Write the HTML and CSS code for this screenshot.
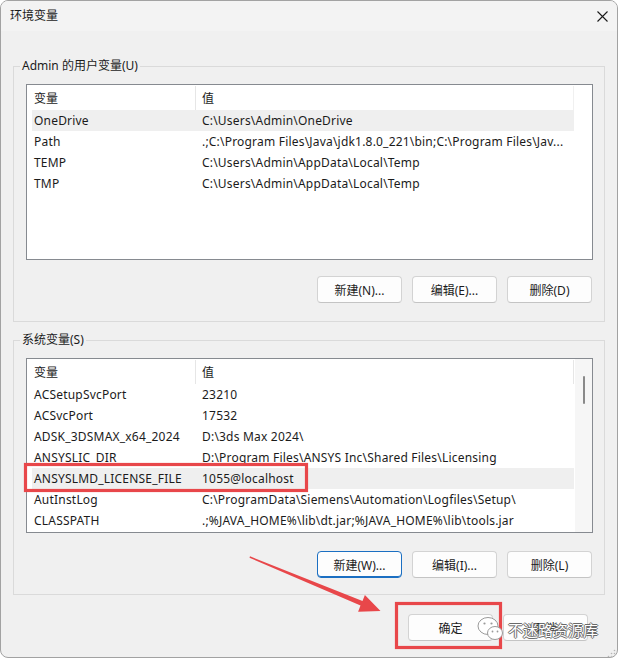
FILE: index.html
```html
<!DOCTYPE html>
<html lang="zh-CN">
<head>
<meta charset="utf-8">
<title>环境变量</title>
<link rel="stylesheet" href="styles.css">
</head>
<body>
<div class="window">
  <div class="titlebar">
    <span class="title">环境变量</span>
    <span class="close" aria-label="关闭">
      <svg width="11" height="11" viewBox="0 0 11 11"><path d="M0.5 0.5 L10.5 10.5 M10.5 0.5 L0.5 10.5" stroke="#1a1a1a" stroke-width="1.1" fill="none"/></svg>
    </span>
  </div>
  <div class="content">
    <fieldset class="group group-user">
      <legend>Admin 的用户变量(U)</legend>
      <div class="list list-user">
        <div class="list-main">
          <div class="lv-header"><div class="hc c1">变量</div><div class="hc c2">值</div></div>
          <div class="lv-row hl"><div class="c1">OneDrive</div><div class="c2">C:\Users\Admin\OneDrive</div></div>
          <div class="lv-row"><div class="c1">Path</div><div class="c2">.;C:\Program Files\Java\jdk1.8.0_221\bin;C:\Program Files\Jav...</div></div>
          <div class="lv-row"><div class="c1">TEMP</div><div class="c2">C:\Users\Admin\AppData\Local\Temp</div></div>
          <div class="lv-row"><div class="c1">TMP</div><div class="c2">C:\Users\Admin\AppData\Local\Temp</div></div>
        </div>
        <div class="vscroll blank"></div>
      </div>
      <div class="btnrow">
        <button class="btn">新建(N)...</button>
        <button class="btn">编辑(E)...</button>
        <button class="btn">删除(D)</button>
      </div>
    </fieldset>

    <fieldset class="group group-sys">
      <legend>系统变量(S)</legend>
      <div class="list list-sys">
        <div class="list-main">
          <div class="lv-header"><div class="hc c1">变量</div><div class="hc c2">值</div></div>
          <div class="lv-row"><div class="c1">ACSetupSvcPort</div><div class="c2">23210</div></div>
          <div class="lv-row"><div class="c1">ACSvcPort</div><div class="c2">17532</div></div>
          <div class="lv-row"><div class="c1">ADSK_3DSMAX_x64_2024</div><div class="c2">D:\3ds Max 2024\</div></div>
          <div class="lv-row"><div class="c1">ANSYSLIC_DIR</div><div class="c2">D:\Program Files\ANSYS Inc\Shared Files\Licensing</div></div>
          <div class="lv-row hl"><div class="c1">ANSYSLMD_LICENSE_FILE</div><div class="c2">1055@localhost</div></div>
          <div class="lv-row"><div class="c1">AutInstLog</div><div class="c2">C:\ProgramData\Siemens\Automation\Logfiles\Setup\</div></div>
          <div class="lv-row"><div class="c1">CLASSPATH</div><div class="c2">.;%JAVA_HOME%\lib\dt.jar;%JAVA_HOME%\lib\tools.jar</div></div>
        </div>
        <div class="vscroll"><div class="thumb"></div></div>
      </div>
      <div class="btnrow">
        <button class="btn btn-focus">新建(W)...</button>
        <button class="btn">编辑(I)...</button>
        <button class="btn">删除(L)</button>
      </div>
    </fieldset>

    <div class="dlg-buttons">
      <button class="btn">确定</button>
      <button class="btn">取消</button>
    </div>
  </div>

  <svg class="annot" width="618" height="659" viewBox="0 0 618 659">
    <rect x="25.5" y="464.5" width="281" height="26" fill="none" stroke="#e8474a" stroke-width="3.2"/>
    <rect x="396.5" y="603.5" width="104" height="44" fill="none" stroke="#e8474a" stroke-width="3.2"/>
    <polygon points="250,556.3 362.5,600.9 364.9,595 380.5,611 358.1,611.8 360.5,605.6 249.5,557.7" fill="#e8474a"/>
    <g class="wechat">
      <ellipse cx="488" cy="626" rx="10" ry="8.5" fill="#fff" stroke="#9a9a9a" stroke-width="1"/>
      <circle cx="484.5" cy="623.5" r="1.1" fill="#9a9a9a"/>
      <circle cx="491.5" cy="623.5" r="1.1" fill="#9a9a9a"/>
      <ellipse cx="495" cy="633" rx="7.5" ry="6.5" fill="#fff" stroke="#9a9a9a" stroke-width="1"/>
      <circle cx="492.5" cy="631.5" r="0.9" fill="#9a9a9a"/>
      <circle cx="497.5" cy="631.5" r="0.9" fill="#9a9a9a"/>
    </g>
    <g fill="#b5b5b5">
      <circle cx="614.5" cy="650.5" r="0.8"/>
      <circle cx="611.5" cy="653.5" r="0.8"/>
      <circle cx="614.5" cy="653.5" r="0.8"/>
      <circle cx="608.5" cy="656.5" r="0.8"/>
      <circle cx="611.5" cy="656.5" r="0.8"/>
      <circle cx="614.5" cy="656.5" r="0.8"/>
    </g>
  </svg>
  <span class="watermark">不迷路资源库</span>
</div>
</body>
</html>
```

FILE: styles.css
```css
* { box-sizing: border-box; }

html, body {
  margin: 0;
  padding: 0;
  background: #ffffff;
}

body {
  font-family: "Noto Sans", "Noto Sans CJK SC", sans-serif;
  font-size: 12px;
  color: #1b1b1b;
}

.window {
  position: relative;
  width: 618px;
  height: 658px;
  border: 1px solid #a2a2a2;
  border-radius: 8px;
  background: #f0f0f0;
  overflow: hidden;
}

.titlebar {
  height: 30px;
  background: #f3f3f3;
  display: flex;
  align-items: center;
  justify-content: space-between;
  padding: 0 9px;
}

.title {
  font-size: 12px;
  line-height: 16px;
  color: #1a1a1a;
}

.close {
  display: flex;
  width: 11px;
  height: 11px;
}

.content {
  padding: 27px 12px 0 12px;
}

.group {
  margin: 0;
  border: 1px solid #dadada;
  padding: 10px 11px 18px 12px;
}

.group-sys {
  margin-top: 10px;
  padding-top: 10px;
  padding-bottom: 16px;
}

.group legend {
  padding: 0 2px;
  margin-left: -6px;
  font-size: 12px;
  line-height: 16px;
  color: #1b1b1b;
}

.list {
  display: flex;
  border: 1px solid #868a90;
  background: #ffffff;
}

.list-user { height: 176px; }
.list-sys { height: 175px; }

.list-main {
  flex: 1;
  padding-left: 5px;
  overflow: hidden;
}

.vscroll {
  width: 17px;
  background: #f6f6f6;
  display: flex;
  justify-content: center;
  padding-top: 17px;
}

.vscroll.blank {
  background: #ffffff;
}

.thumb {
  width: 2px;
  height: 28px;
  border-radius: 1px;
  background: #8a8a8a;
}

.lv-header {
  display: flex;
  height: 25px;
  width: 542px;
}

.hc {
  display: flex;
  align-items: center;
  height: 24px;
  margin-top: 1px;
  border-right: 1px solid #e6e6e6;
}

.hc.c1 { width: 164px; padding-left: 2px; }
.hc.c2 { flex: 1; padding-left: 6px; }

.list-user .hc.c2 { border-right-color: #f0f0f0; }

.lv-row {
  display: flex;
  align-items: center;
  height: 21px;
  width: 542px;
  white-space: nowrap;
  color: #1b1b1b;
  letter-spacing: 0.2px;
}

.lv-row.hl { background: #efefef; }

.lv-row .c1 {
  width: 164px;
  padding-left: 2px;
  overflow: hidden;
}

.lv-row .c2 {
  flex: 1;
  padding-left: 6px;
  overflow: hidden;
}

.btnrow {
  display: flex;
  justify-content: flex-end;
  gap: 10px;
  margin-top: 16px;
  padding-right: 1px;
}

.group-sys .btnrow { margin-top: 18px; }

.btn {
  width: 85px;
  height: 27px;
  padding: 0;
  border: 1px solid #d3d3d3;
  border-bottom-color: #c4c4c4;
  border-radius: 4px;
  background: #fdfdfd;
  font-family: "Noto Sans", "Noto Sans CJK SC", sans-serif;
  font-size: 12px;
  color: #1b1b1b;
}

.btn-focus {
  border: 1px solid #1b6fc2;
  box-shadow: inset 0 -1px 0 #1b6fc2;
}

.dlg-buttons {
  display: flex;
  justify-content: flex-end;
  gap: 10px;
  margin-top: 19px;
  padding-right: 17px;
}

.annot {
  position: absolute;
  left: -1px;
  top: -1px;
  pointer-events: none;
}

.watermark {
  position: absolute;
  left: 507px;
  top: 619px;
  font-family: "Noto Sans CJK SC", sans-serif;
  font-size: 15px;
  line-height: 20px;
  color: #ffffff;
  text-shadow: 1px 0 0 #6a6a6a, -1px 0 0 #6a6a6a, 0 1px 0 #6a6a6a, 0 -1px 0 #6a6a6a;
  white-space: nowrap;
}
```
